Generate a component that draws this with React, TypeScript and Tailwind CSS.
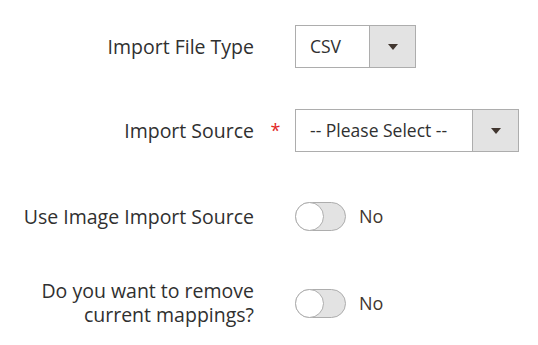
const font = { fontFamily: '"Open Sans", "Noto Sans", sans-serif' };

const Arrow = () => (
  <svg width="10" height="6" viewBox="0 0 10 6">
    <path d="M0 0h10L5 6z" fill="#41362f" />
  </svg>
);

const Select = ({ value, width }: { value: string; width: string }) => (
  <div className={`flex h-[43px] ${width} border border-[#adadad] bg-white`}>
    <div className="flex flex-1 items-center pl-[14px] text-[17.5px] text-[#303030]">
      {value}
    </div>
    <div className="flex w-[46px] items-center justify-center border-l border-[#adadad] bg-[#e3e3e3]">
      <Arrow />
    </div>
  </div>
);

const Toggle = () => (
  <div className="flex items-center gap-[13px]">
    <div className="relative h-[29px] w-[51px] rounded-full border border-[#adadad] bg-[#e3e3e3]">
      <div className="absolute left-[-1px] top-[-1px] h-[29px] w-[29px] rounded-full border border-[#adadad] bg-white" />
    </div>
    <span className="text-[18px] text-[#41362f]">No</span>
  </div>
);

const Row = ({
  label,
  required,
  className = "",
  children,
}: {
  label: React.ReactNode;
  required?: boolean;
  className?: string;
  children: React.ReactNode;
}) => (
  <div className={`flex items-center ${className}`}>
    <div className="w-[254px] text-right text-[19.5px] leading-[24px] text-[#303030]">
      {label}
    </div>
    <div className="flex w-[41px] justify-center pl-[2px] text-[18px] text-[#e22626]">
      {required ? "*" : ""}
    </div>
    {children}
  </div>
);

export default function App() {
  return (
    <div className="flex h-[345px] w-[538px] flex-col gap-[41px] bg-white pt-[25px]" style={font}>
      <Row label="Import File Type">
        <Select value="CSV" width="w-[121px]" />
      </Row>
      <Row label="Import Source" required>
        <Select value="-- Please Select --" width="w-[224px]" />
      </Row>
      <Row label="Use Image Import Source" className="mt-[2px]">
        <div className="flex h-[43px] items-center">
          <Toggle />
        </div>
      </Row>
      <Row
        label={
          <>
            Do you want to remove
            <br />
            current mappings?
          </>
        }
      >
        <Toggle />
      </Row>
    </div>
  );
}
